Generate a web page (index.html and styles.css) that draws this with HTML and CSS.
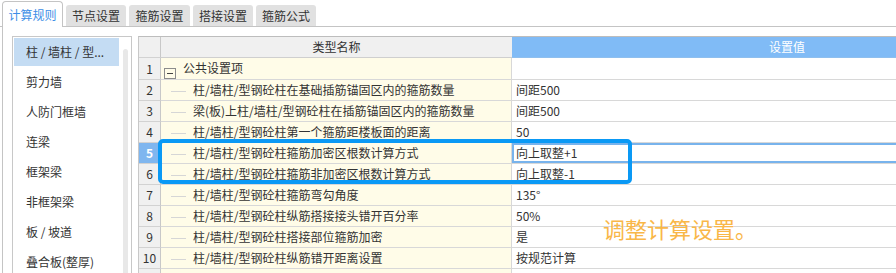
FILE: index.html
```html
<!DOCTYPE html>
<html lang="zh-CN">
<head>
    <meta charset="UTF-8">
    <title>计算设置</title>
    <link rel="stylesheet" href="styles.css">
</head>
<body>
    <div class="tabs">
        <div class="tab active">计算规则</div>
        <div class="tab">节点设置</div>
        <div class="tab wide">箍筋设置</div>
        <div class="tab">搭接设置</div>
        <div class="tab">箍筋公式</div>
    </div>
    <div class="main">
        <div class="side">
            <ul class="side-list">
                <li class="selected">柱 / 墙柱 / 型...</li>
                <li>剪力墙</li>
                <li>人防门框墙</li>
                <li>连梁</li>
                <li>框架梁</li>
                <li>非框架梁</li>
                <li>板 / 坡道</li>
                <li>叠合板(整厚)</li>
            </ul>
            <div class="side-scroll"></div>
        </div>
        <table class="grid">
            <colgroup>
                <col class="col-num">
                <col class="col-name">
                <col class="col-value">
            </colgroup>
            <thead>
                <tr>
                    <th class="num"></th>
                    <th class="name-head">类型名称</th>
                    <th class="value-head">设置值</th>
                </tr>
            </thead>
            <tbody>
                <tr>
                    <td class="num">1</td>
                    <td class="name"><span class="toggle"></span>公共设置项</td>
                    <td class="value"></td>
                </tr>
                <tr>
                    <td class="num">2</td>
                    <td class="name"><span class="branch"></span>柱/墙柱/型钢砼柱在基础插筋锚固区内的箍筋数量</td>
                    <td class="value">间距500</td>
                </tr>
                <tr>
                    <td class="num">3</td>
                    <td class="name"><span class="branch"></span>梁(板)上柱/墙柱/型钢砼柱在插筋锚固区内的箍筋数量</td>
                    <td class="value">间距500</td>
                </tr>
                <tr>
                    <td class="num">4</td>
                    <td class="name"><span class="branch"></span>柱/墙柱/型钢砼柱第一个箍筋距楼板面的距离</td>
                    <td class="value">50</td>
                </tr>
                <tr>
                    <td class="num current">5</td>
                    <td class="name"><span class="branch"></span>柱/墙柱/型钢砼柱箍筋加密区根数计算方式</td>
                    <td class="value editing">向上取整+1</td>
                </tr>
                <tr>
                    <td class="num">6</td>
                    <td class="name"><span class="branch"></span>柱/墙柱/型钢砼柱箍筋非加密区根数计算方式</td>
                    <td class="value">向上取整-1</td>
                </tr>
                <tr>
                    <td class="num">7</td>
                    <td class="name"><span class="branch"></span>柱/墙柱/型钢砼柱箍筋弯勾角度</td>
                    <td class="value">135°</td>
                </tr>
                <tr>
                    <td class="num">8</td>
                    <td class="name"><span class="branch"></span>柱/墙柱/型钢砼柱纵筋搭接接头错开百分率</td>
                    <td class="value">50%</td>
                </tr>
                <tr>
                    <td class="num">9</td>
                    <td class="name"><span class="branch"></span>柱/墙柱/型钢砼柱搭接部位箍筋加密</td>
                    <td class="value">是</td>
                </tr>
                <tr>
                    <td class="num">10</td>
                    <td class="name"><span class="branch"></span>柱/墙柱/型钢砼柱纵筋错开距离设置</td>
                    <td class="value">按规范计算</td>
                </tr>
                <tr>
                    <td class="num">11</td>
                    <td class="name"><span class="branch"></span>柱/墙柱/型钢砼柱箍筋加密范围包含错开距离</td>
                    <td class="value">是</td>
                </tr>
            </tbody>
        </table>
    </div>
    <div class="callout"></div>
    <div class="note">调整计算设置。</div>
</body>
</html>
```

FILE: styles.css
```css
* {
    box-sizing: border-box;
}

body {
    margin: 0;
    width: 896px;
    height: 273px;
    overflow: hidden;
    background: #ffffff;
    font-family: "Noto Sans CJK SC", "Microsoft YaHei", sans-serif;
    font-size: 12px;
    color: #333333;
    position: relative;
}

/* tabs */
.tabs {
    display: flex;
    align-items: flex-end;
    gap: 3px;
    height: 27px;
    padding-left: 2px;
    border-bottom: 1px solid #c4c4c4;
}

.tab {
    width: 60px;
    height: 21px;
    display: flex;
    align-items: center;
    justify-content: center;
    background: #e1e1e1;
    border-radius: 3px 3px 0 0;
}

.tab.wide {
    width: 61px;
}

.tab.active {
    width: 61px;
    height: 26px;
    margin-bottom: -1px;
    padding-bottom: 1px;
    background: #ffffff;
    color: #3d8ee6;
    border: 1px solid #c4c4c4;
    border-bottom: none;
    border-radius: 4px 4px 0 0;
}

/* body area */
.main {
    display: flex;
    gap: 6px;
    height: 246px;
    margin-left: 2px;
    padding: 9px 0 0 9px;
    border-left: 1px solid #c4c4c4;
    overflow: hidden;
}

.side {
    flex-shrink: 0;
    display: flex;
    width: 120px;
    height: 260px;
    padding: 1px;
    border: 1px solid #c8c8c8;
}

.side-list {
    list-style: none;
    margin: 0;
    padding: 0;
    width: 105px;
}

.side-list li {
    height: 28px;
    margin-bottom: 2px;
    padding-left: 12px;
    line-height: 28px;
    white-space: nowrap;
}

.side-list li.selected {
    background: #c4dcf3;
}

.side-scroll {
    width: 5px;
    height: 240px;
    margin: 11px 0 0 4px;
    background: #e8e8e8;
    border-radius: 3px;
}

/* grid */
.grid {
    flex-shrink: 0;
    width: 923px;
    table-layout: fixed;
    border-collapse: separate;
    border-spacing: 0;
    border-top: 1px solid #bdbdbd;
    border-left: 1px solid #c8c8c8;
    align-self: flex-start;
}

.col-num {
    width: 22px;
}

.col-name {
    width: 351px;
}

.col-value {
    width: 550px;
}

.grid th,
.grid td {
    height: 21px;
    padding: 0;
    line-height: 20px;
    font-weight: normal;
    white-space: nowrap;
    overflow: hidden;
    border-bottom: 1px solid #d8d8d8;
}

.grid th {
    background: #f0f0f0;
    border-bottom-color: #cfcfcf;
}

.grid th.value-head {
    background: #80bbf6;
    color: #ffffff;
    border-bottom-color: #8fbfee;
}

.grid .num {
    background: #f0f0f0;
    text-align: center;
    border-right: 1px solid #c8c8c8;
    border-bottom-color: #d2d2d2;
}

.grid td.num.current {
    background: #7fb6ef;
    color: #ffffff;
    font-weight: bold;
}

.grid td.name {
    padding-left: 3px;
    background: #fffce8;
    border-right: 1px solid #d8d8d8;
}

.grid td.value {
    padding-left: 4px;
}

.grid td.editing {
    box-shadow: inset 0 0 0 2px #78b3ec;
}

.toggle {
    display: inline-flex;
    align-items: center;
    justify-content: center;
    width: 12px;
    height: 11px;
    margin-right: 7px;
    vertical-align: -1px;
    border: 1px solid #8c8c8c;
}

.toggle::before {
    content: "";
    width: 6px;
    height: 1px;
    background: #444444;
}

.branch {
    display: inline-block;
    width: 15px;
    height: 1px;
    margin: 0 7px 0 7px;
    vertical-align: middle;
    background: #d6d6d6;
}

/* annotation overlays */
.callout {
    position: absolute;
    left: 158px;
    top: 139px;
    width: 474px;
    height: 45px;
    border: 4px solid #0a99f5;
    border-radius: 5px;
}

.note {
    position: absolute;
    left: 603px;
    top: 217px;
    font-size: 22px;
    line-height: 22px;
    color: #f9b748;
    white-space: nowrap;
}
```
